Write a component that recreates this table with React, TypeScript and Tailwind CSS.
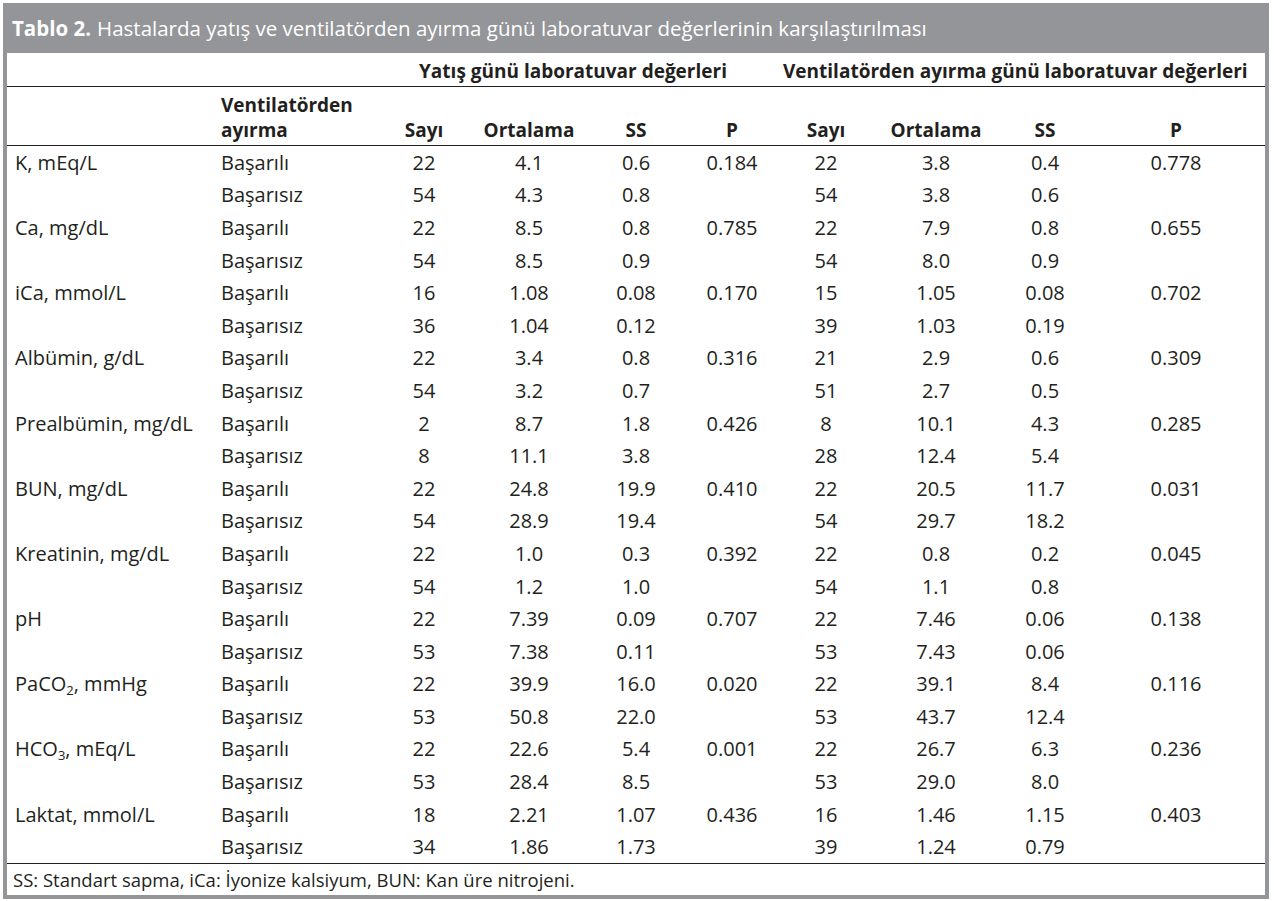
import React from "react"

type Row = [React.ReactNode, string[], string[]]

const rows: Row[] = [
  ["K, mEq/L", ["22", "4.1", "0.6", "0.184", "22", "3.8", "0.4", "0.778"], ["54", "4.3", "0.8", "", "54", "3.8", "0.6", ""]],
  ["Ca, mg/dL", ["22", "8.5", "0.8", "0.785", "22", "7.9", "0.8", "0.655"], ["54", "8.5", "0.9", "", "54", "8.0", "0.9", ""]],
  ["iCa, mmol/L", ["16", "1.08", "0.08", "0.170", "15", "1.05", "0.08", "0.702"], ["36", "1.04", "0.12", "", "39", "1.03", "0.19", ""]],
  ["Albümin, g/dL", ["22", "3.4", "0.8", "0.316", "21", "2.9", "0.6", "0.309"], ["54", "3.2", "0.7", "", "51", "2.7", "0.5", ""]],
  ["Prealbümin, mg/dL", ["2", "8.7", "1.8", "0.426", "8", "10.1", "4.3", "0.285"], ["8", "11.1", "3.8", "", "28", "12.4", "5.4", ""]],
  ["BUN, mg/dL", ["22", "24.8", "19.9", "0.410", "22", "20.5", "11.7", "0.031"], ["54", "28.9", "19.4", "", "54", "29.7", "18.2", ""]],
  ["Kreatinin, mg/dL", ["22", "1.0", "0.3", "0.392", "22", "0.8", "0.2", "0.045"], ["54", "1.2", "1.0", "", "54", "1.1", "0.8", ""]],
  ["pH", ["22", "7.39", "0.09", "0.707", "22", "7.46", "0.06", "0.138"], ["53", "7.38", "0.11", "", "53", "7.43", "0.06", ""]],
  [
    <>PaCO<sub className="text-[13px] relative top-[4px] align-baseline">2</sub>, mmHg</>,
    ["22", "39.9", "16.0", "0.020", "22", "39.1", "8.4", "0.116"],
    ["53", "50.8", "22.0", "", "53", "43.7", "12.4", ""],
  ],
  [
    <>HCO<sub className="text-[13px] relative top-[4px] align-baseline">3</sub>, mEq/L</>,
    ["22", "22.6", "5.4", "0.001", "22", "26.7", "6.3", "0.236"],
    ["53", "28.4", "8.5", "", "53", "29.0", "8.0", ""],
  ],
  ["Laktat, mmol/L", ["18", "2.21", "1.07", "0.436", "16", "1.46", "1.15", "0.403"], ["34", "1.86", "1.73", "", "39", "1.24", "0.79", ""]],
]

const cols = "grid grid-cols-[206px_168px_86px_124px_90px_102px_86px_134px_84px_178px]"

function DataRow({ label, outcome, values }: { label: React.ReactNode; outcome: string; values: string[] }) {
  return (
    <div className={`${cols} h-[32.6px] items-center leading-[27px]`}>
      <div className="pl-2 whitespace-nowrap">{label}</div>
      <div className="pl-[8px]">{outcome}</div>
      {values.map((v, i) => (
        <div key={i} className="text-center">
          {v}
        </div>
      ))}
    </div>
  )
}

export default function App() {
  return (
    <div className="bg-white min-h-[901px] pt-[3px] pl-[3px]" style={{ fontFamily: '"Open Sans", sans-serif' }}>
      <div className="w-[1266px] bg-[#939598] px-[4px] pb-[4px]">
        {/* Title bar */}
        <div className="h-[50px] flex items-center pl-[5px] text-white text-[20.5px] whitespace-nowrap">
          <span className="font-bold mr-[6px]">Tablo 2.</span>
          Hastalarda yatış ve ventilatörden ayırma günü laboratuvar değerlerinin karşılaştırılması
        </div>

        <div className="bg-white text-[#231f20] text-[20px]">
          {/* Group header */}
          <div className={`${cols} h-[33.5px] items-end pb-[2px] font-bold text-[19px] leading-[25px] border-b-[1.5px] border-[#231f20]`}>
            <div className="col-span-2"></div>
            <div className="col-span-4 pl-[38px] whitespace-nowrap">Yatış günü laboratuvar değerleri</div>
            <div className="col-span-4 whitespace-nowrap">Ventilatörden ayırma günü laboratuvar değerleri</div>
          </div>

          {/* Column headers */}
          <div className={`${cols} h-[59.5px] items-end pb-[2px] font-bold text-[19px] leading-[25px] border-b-[1.5px] border-[#231f20]`}>
            <div></div>
            <div className="pl-[8px]">
              Ventilatörden
              <br />
              ayırma
            </div>
            <div className="text-center">Sayı</div>
            <div className="text-center">Ortalama</div>
            <div className="text-center">SS</div>
            <div className="text-center">P</div>
            <div className="text-center">Sayı</div>
            <div className="text-center">Ortalama</div>
            <div className="text-center">SS</div>
            <div className="text-center">P</div>
          </div>

          {/* Body */}
          <div className="border-b-[1.5px] border-[#231f20]">
            {rows.map(([label, ok, fail], i) => (
              <div key={i}>
                <DataRow label={label} outcome="Başarılı" values={ok} />
                <DataRow label="" outcome="Başarısız" values={fail} />
              </div>
            ))}
          </div>

          {/* Footnote */}
          <div className="h-[31px] flex items-center pl-[6px] text-[18.5px] whitespace-nowrap">
            SS: Standart sapma, iCa: İyonize kalsiyum, BUN: Kan üre nitrojeni.
          </div>
        </div>
      </div>
    </div>
  )
}
